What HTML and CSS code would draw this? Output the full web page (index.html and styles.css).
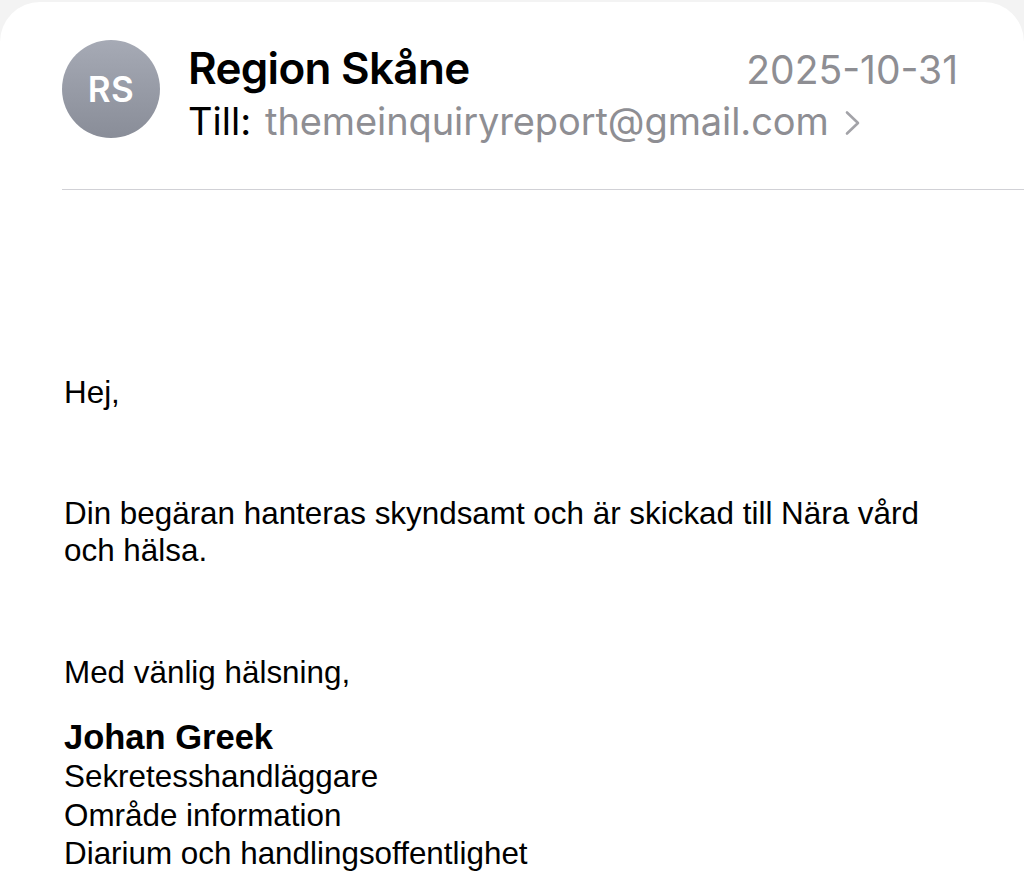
FILE: index.html
```html
<!DOCTYPE html>
<html lang="sv">
<head>
<meta charset="utf-8">
<title>Region Skåne</title>
<link rel="stylesheet" href="styles.css">
</head>
<body>
<div class="card">
  <header class="header">
    <div class="avatar"><span>RS</span></div>
    <div class="meta">
      <div class="row1">
        <span class="sender">Region Skåne</span>
        <span class="date">2025-10-31</span>
      </div>
      <div class="row2">
        <span class="till">Till:</span>
        <span class="email">themeinquiryreport@gmail.com</span>
        <svg class="chev" width="18" height="26" viewBox="0 0 18 26"><path d="M3 2.5 L14 13 L3 23.5" fill="none" stroke="#a3a3a8" stroke-width="2.6" stroke-linecap="round" stroke-linejoin="round"/></svg>
      </div>
    </div>
  </header>
  <div class="divider"></div>
  <main class="body">
    <p class="p-hej">Hej,</p>
    <p class="p-main">Din begäran hanteras skyndsamt och är skickad till Nära vård och hälsa.</p>
    <p class="p-greet">Med vänlig hälsning,</p>
    <div class="sig">
      <div class="sig-name">Johan Greek</div>
      <div class="sig-line">Sekretesshandläggare</div>
      <div class="sig-line">Område information</div>
      <div class="sig-line">Diarium och handlingsoffentlighet</div>
    </div>
  </main>
</div>
</body>
</html>
```
FILE: styles.css
```css
html, body {
  margin: 0;
  padding: 0;
}
body {
  background: #f3f3f3;
  width: 1024px;
  height: 879px;
  overflow: hidden;
}
.card {
  margin-top: 2px;
  background: #ffffff;
  border-radius: 40px 40px 0 0;
  height: 877px;
  padding: 38px 0 0 62px;
  box-sizing: border-box;
}
.header {
  display: flex;
  align-items: flex-start;
  gap: 28px;
}
.avatar {
  width: 98px;
  height: 98px;
  border-radius: 50%;
  background: linear-gradient(180deg, #a6aab5 0%, #898d98 100%);
  display: flex;
  align-items: center;
  justify-content: center;
  color: #ffffff;
  font-family: Inter, "Noto Sans", sans-serif;
  font-weight: 600;
  font-size: 35px;
  letter-spacing: 0.5px;
}
.meta {
  flex: 1;
  padding-right: 66px;
  font-family: Inter, "Noto Sans", sans-serif;
}
.row1 {
  display: flex;
  justify-content: space-between;
  align-items: baseline;
  height: 56px;
}
.sender {
  font-size: 44px;
  font-weight: 600;
  color: #000000;
  line-height: 56px;
  letter-spacing: -0.7px;
}
.date {
  font-size: 39px;
  color: #8e8e93;
  line-height: 56px;
}
.row2 {
  display: flex;
  align-items: baseline;
  font-size: 38px;
  line-height: 50px;
}
.till {
  color: #000000;
  margin-right: 14px;
}
.email {
  color: #8e8e93;
  letter-spacing: -0.1px;
}
.chev {
  margin-left: 15px;
  align-self: center;
  position: relative;
  top: 2px;
}
.divider {
  margin-top: 43px;
  border-top: 1px solid #d1d1d6;
}
.body {
  font-family: "Liberation Sans", Arial, sans-serif;
  font-size: 31.4px;
  line-height: 37px;
  color: #000000;
  width: 880px;
  padding-left: 2px;
}
.body p {
  margin: 0;
}
.p-hej {
  margin-top: 184px !important;
}
.p-main {
  margin-top: 84px !important;
}
.p-greet {
  margin-top: 85px !important;
}
.sig {
  margin-top: 25px;
  line-height: 38px;
}
.sig-name {
  font-weight: 700;
  font-size: 34.5px;
  line-height: 42px;
}
.sig-line {
  line-height: 38.5px;
}
```
